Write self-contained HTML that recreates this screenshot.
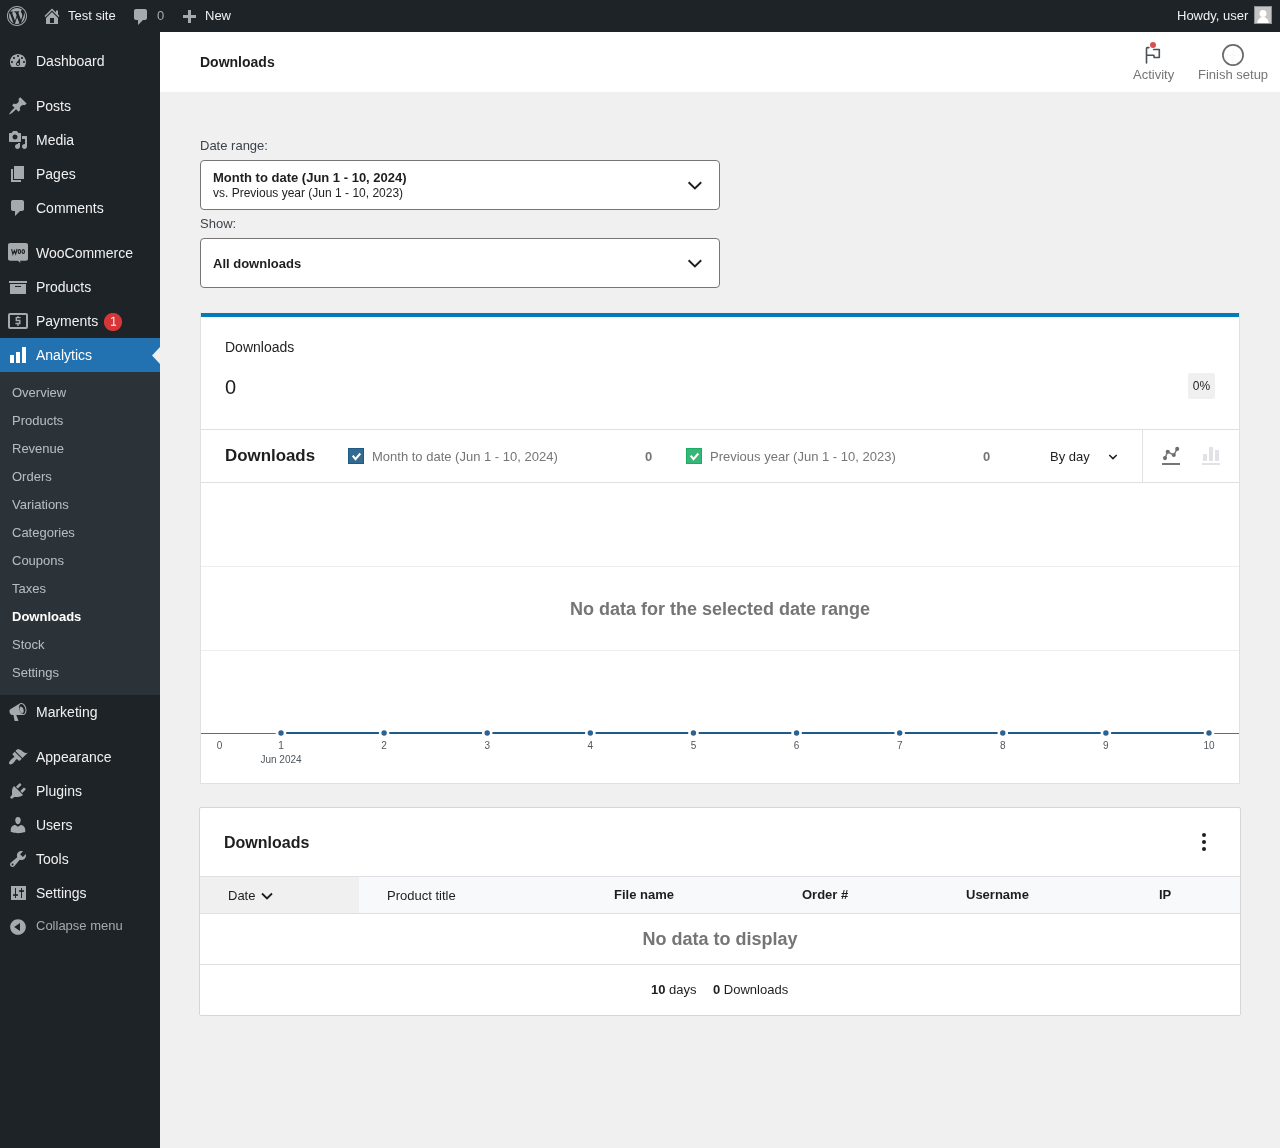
<!DOCTYPE html>
<html><head><meta charset="utf-8">
<style>
*{box-sizing:border-box;margin:0;padding:0}
html,body{width:1280px;height:1148px;overflow:hidden;background:#f0f0f1;-webkit-font-smoothing:antialiased;font-family:"Liberation Sans",sans-serif;color:#1e1e1e}
svg{display:block;position:absolute}
.a{position:absolute;white-space:nowrap}
/* admin bar */
#ab{position:absolute;left:0;top:0;width:1280px;height:32px;background:#1d2327;color:#f0f0f1;font-size:13px}
#ab .a{line-height:32px;top:0}
/* menu */
#menu{position:absolute;left:0;top:32px;width:160px;height:1116px;background:#1d2327}
.mi{position:absolute;left:0;width:160px;height:34px;color:#f0f0f1;font-size:14px;line-height:34px}
.mi>span{position:absolute;left:36px;top:0}
.mi svg{left:8px;top:7px;fill:#a7aaad}
.mi.cur{background:#2271b1;color:#fff}
.mi.cur svg{fill:#fff}
#sub{position:absolute;left:0;top:372px;width:160px;height:323px;background:#2c3338}
.si{position:absolute;left:12px;font-size:13px;color:rgba(240,246,252,.7);line-height:28px;height:28px}
.si.on{color:#fff;font-weight:bold}
/* header */
#hdr{position:absolute;left:160px;top:32px;width:1120px;height:60px;background:#fff}
</style></head>
<body>
<div id="root" style="position:absolute;left:0;top:0;width:1280px;height:1148px;will-change:transform">
<div id="ab">
  <svg style="left:7px;top:6px" width="20" height="20" viewBox="0 0 20 20" fill="#a7aaad"><path d="M20 10c0-5.52-4.48-10-10-10S0 4.48 0 10s4.48 10 10 10 10-4.48 10-10zM10 1.01c4.97 0 8.99 4.02 8.99 8.99s-4.02 8.99-8.99 8.99S1.01 14.97 1.01 10 5.03 1.01 10 1.01zM8.01 14.82L4.96 6.61c.49-.03 1.05-.08 1.05-.08.43-.05.38-1.01-.06-.99 0 0-1.29.1-2.13.1-.15 0-.33 0-.52-.01 1.44-2.17 3.9-3.6 6.7-3.6 2.09 0 3.99.79 5.41 2.09-.6-.08-1.45.35-1.45 1.42 0 .66.38 1.22.79 1.88.31.54.5 1.22.5 2.19 0 1.34-1.27 4.48-1.27 4.48l-2.71-7.5c.48-.03.75-.16.75-.16.43-.05.38-1.1-.05-1.08 0 0-1.3.11-2.14.11-.78 0-2.1-.11-2.1-.11-.43-.02-.48 1.06-.05 1.08l.84.08 1.12 3.04zm6.02 2.15L16.64 10s.67-1.69.39-3.81c.63 1.14.94 2.42.94 3.81 0 2.96-1.56 5.58-3.94 6.97zM2.68 6.77L6.5 17.25c-2.67-1.3-4.47-4.08-4.47-7.25 0-1.16.2-2.23.65-3.23zm7.45 4.53l2.29 6.25c-.75.27-1.57.42-2.42.42-.72 0-1.41-.11-2.06-.3z"/></svg>
  <svg style="left:42px;top:6px" width="20" height="20" viewBox="0 0 20 20" fill="#a7aaad"><path d="M16 8.5l1.53 1.53-1.06 1.06L10 4.62l-6.47 6.47-1.06-1.06L10 2.5l4 4v-2h2v4zm-6-2.46l6 5.99V18H4v-5.97zM12 17v-5H8v5h4z"/></svg>
  <span class="a" style="left:68px">Test site</span>
  <svg style="left:131px;top:7px" width="20" height="20" viewBox="0 0 20 20" fill="#a7aaad"><path d="M5 2h9c1.1 0 2 .9 2 2v7c0 1.1-.9 2-2 2h-2l-5 5v-5H5c-1.1 0-2-.9-2-2V4c0-1.1.9-2 2-2z"/></svg>
  <span class="a" style="left:157px;color:#a7aaad">0</span>
  <svg style="left:183px;top:10px" width="13" height="13" viewBox="0 0 13 13" fill="#a7aaad"><path d="M5 0h3v5h5v3H8v5H5V8H0V5h5z"/></svg>
  <span class="a" style="left:205px">New</span>
  <span class="a" style="left:1177px">Howdy, user</span>
  <div class="a" style="left:1254px;top:6px;width:18px;height:18px;background:#c4c4c4;border:1px solid #8c8f94;overflow:hidden">
    <svg style="left:0;top:0" width="16" height="16" viewBox="0 0 16 16" fill="#fff"><circle cx="8" cy="6.4" r="3.5"/><path d="M2.2 16c.5-3.6 2.6-6 5.8-6s5.3 2.4 5.8 6z"/></svg>
  </div>
</div>
<div id="menu"></div>
<!-- menu items -->
<div class="mi" style="top:44px"><svg width="20" height="20" viewBox="0 0 20 20"><path d="M3.76 16h12.48c1.1-1.37 1.76-3.11 1.76-5 0-4.42-3.58-8-8-8s-8 3.58-8 8c0 1.89.66 3.63 1.76 5zM10 4c.55 0 1 .45 1 1s-.45 1-1 1-1-.45-1-1 .45-1 1-1zM6 6c.55 0 1 .45 1 1s-.45 1-1 1-1-.45-1-1 .45-1 1-1zm8 0c.55 0 1 .45 1 1s-.45 1-1 1-1-.45-1-1 .45-1 1-1zm-5.37 5.55L12 7v6c0 1.1-.9 2-2 2s-2-.9-2-2c0-.57.24-1.08.63-1.45zM4 10c.55 0 1 .45 1 1s-.45 1-1 1-1-.45-1-1 .45-1 1-1zm12 0c.55 0 1 .45 1 1s-.45 1-1 1-1-.45-1-1 .45-1 1-1zm-5 3c0-.55-.45-1-1-1s-1 .45-1 1 .45 1 1 1 1-.45 1-1z"/></svg><span>Dashboard</span></div>
<div class="mi" style="top:89px"><svg width="20" height="20" viewBox="0 0 20 20"><path d="M10.44 3.02l1.82-1.82 6.36 6.35-1.83 1.82c-1.05-.68-2.48-.57-3.41.36l-.75.75c-.92.93-1.04 2.35-.35 3.41l-1.83 1.82-2.41-2.41-2.8 2.79c-.42.42-3.38 2.71-3.8 2.29s1.86-3.39 2.28-3.81l2.79-2.79L4.1 9.36l1.83-1.82c1.05.69 2.48.57 3.4-.36l.75-.75c.93-.92 1.05-2.35.36-3.41z"/></svg><span>Posts</span></div>
<div class="mi" style="top:123px"><svg width="20" height="20" viewBox="0 0 20 20"><path d="M13 11V4c0-.55-.45-1-1-1h-1.67L9 1H5L3.67 3H2c-.55 0-1 .45-1 1v7c0 .55.45 1 1 1h10c.55 0 1-.45 1-1zM7 4.5c1.38 0 2.5 1.12 2.5 2.5S8.38 9.5 7 9.5 4.5 8.38 4.5 7 5.62 4.5 7 4.5zM14 6h5v10.5c0 1.38-1.12 2.5-2.5 2.5S14 17.88 14 16.5s1.12-2.5 2.5-2.5c.17 0 .34.02.5.05V9h-3V6zm-4 8.05V13h2v3.5c0 1.38-1.12 2.5-2.5 2.5S7 17.88 7 16.5 8.12 14 9.5 14c.17 0 .34.02.5.05z"/></svg><span>Media</span></div>
<div class="mi" style="top:157px"><svg width="20" height="20" viewBox="0 0 20 20"><path d="M6 15V2h10v13H6zm-1 1h8v2H3V5h2v11z"/></svg><span>Pages</span></div>
<div class="mi" style="top:191px"><svg width="20" height="20" viewBox="0 0 20 20"><path d="M5 2h9c1.1 0 2 .9 2 2v7c0 1.1-.9 2-2 2h-2l-5 5v-5H5c-1.1 0-2-.9-2-2V4c0-1.1.9-2 2-2z"/></svg><span>Comments</span></div>
<div class="mi" style="top:236px"><svg width="20" height="20" viewBox="0 0 20 20"><path d="M2 0h16c1.1 0 2 .9 2 2v13.8c0 1.1-.9 2-2 2h-5.9l.3 2.1-2.4-2.1H2c-1.1 0-2-.9-2-2V2C0 .9.9 0 2 0z"/><g fill="none" stroke="#1d2327" stroke-width="1.15"><path d="M3.6 6.1l1.3 5.1 1.5-3.6 1.3 3.4 1.4-5"/><ellipse cx="11.4" cy="8.5" rx="1.2" ry="1.95"/><ellipse cx="15.3" cy="8.5" rx="1.2" ry="1.95"/></g></svg><span>WooCommerce</span></div>
<div class="mi" style="top:270px"><svg width="20" height="20" viewBox="0 0 20 20"><path d="M19 4v2H1V4h18zM2 7h16v10H2V7zm11 3V9H7v1h6z"/></svg><span>Products</span></div>
<div class="mi" style="top:304px"><svg width="20" height="20" viewBox="0 0 20 20"><rect x="1" y="3.1" width="18" height="13.9" rx="1" fill="none" stroke="#a7aaad" stroke-width="2"/><path d="M12.6 6.6H8.3v2.9h3.5v3H7.4M10 4.9v1.8M10 12.4V15" fill="none" stroke="#a7aaad" stroke-width="1.4"/></svg><span>Payments</span>
  <svg style="left:104px;top:9px" width="18" height="18" viewBox="0 0 18 18"><circle cx="9" cy="9" r="9.1" fill="#d63638"/><path d="M9.8 4v8.2M7 12.3h5.1M9.6 4.1L7.2 5.6" fill="none" stroke="#fff" stroke-width="1.05"/></svg></div>
<div class="mi cur" style="top:338px"><svg width="20" height="20" viewBox="0 0 20 20"><path d="M18 18V2h-4v16h4zm-6 0V7H8v11h4zm-6 0v-8H2v8h4z"/></svg><span>Analytics</span>
  <svg style="left:152px;top:9px" width="8" height="17" viewBox="0 0 8 17"><path d="M8 0v17L0 8.5z" fill="#f0f0f1"/></svg></div>
<div id="sub">
  <div class="si" style="top:7px">Overview</div>
  <div class="si" style="top:35px">Products</div>
  <div class="si" style="top:63px">Revenue</div>
  <div class="si" style="top:91px">Orders</div>
  <div class="si" style="top:119px">Variations</div>
  <div class="si" style="top:147px">Categories</div>
  <div class="si" style="top:175px">Coupons</div>
  <div class="si" style="top:203px">Taxes</div>
  <div class="si on" style="top:231px">Downloads</div>
  <div class="si" style="top:259px">Stock</div>
  <div class="si" style="top:287px">Settings</div>
</div>
<div class="mi" style="top:695px"><svg width="20" height="20" viewBox="0 0 20 20"><path d="M18.15 5.94c.46 1.62.38 3.22-.02 4.48-.42 1.28-1.26 2.18-2.3 2.48-.16.06-.26.06-.4.06-.06.02-.12.02-.18.02-.06.02-.14.02-.22.02h-6.8l2.22 5.5c.02.14-.06.26-.14.34-.08.1-.24.16-.34.16H6.95c-.1 0-.26-.06-.34-.16-.08-.08-.16-.2-.14-.34l-1-5.5H4.25l-.02-.02c-.5.06-1.08-.18-1.54-.62s-.88-1.08-1.06-1.88c-.24-.8-.2-1.56-.02-2.2.18-.62.58-1.08 1.06-1.3l.02-.02 9-5.4c.1-.06.18-.1.24-.16.06-.04.14-.08.24-.12.16-.08.28-.12.5-.18 1.04-.3 2.24.1 3.22.98s1.84 2.24 2.26 3.86zm-2.58 5.98h-.02c.4-.1.74-.34 1.04-.7.58-.7.86-1.76.86-3.04 0-.64-.1-1.3-.28-1.98-.34-1.36-1.02-2.5-1.78-3.24s-1.68-1.1-2.46-.88c-.82.22-1.4.96-1.7 2-.32 1.04-.28 2.360.06 3.72.38 1.36 1 2.52 1.8 3.24.78.74 1.62 1.1 2.48.88zm-2.54-7.08c.22-.04.42-.02.62.04.38.16.76.48 1.120 1s.64 1.14.8 1.84c.2.68.2 1.36.1 1.94-.1.6-.38 1.08-.8 1.32-.4.24-.8.18-1.18-.02-.42-.2-.84-.62-1.18-1.16-.34-.52-.62-1.16-.78-1.86-.2-.7-.2-1.36-.1-1.94.1-.58.4-1.06.8-1.32.18-.1.38-.18.6-.22z"/></svg><span>Marketing</span></div>
<div class="mi" style="top:740px"><svg width="20" height="20" viewBox="0 0 20 20"><path d="M14.48 11.06L7.41 3.99l1.5-1.5c.5-.56 2.3-.47 3.51.32 1.21.8 1.43 1.28 2.91 2.1 1.18.64 2.45 1.26 4.45.85zm-.71.71L6.7 4.7 4.93 6.47c-.39.39-.39 1.02 0 1.41l1.06 1.06c.39.39.39 1.03 0 1.42-.6.6-1.43 1.11-2.21 1.690-.35.26-.7.53-1.01.84C1.43 14.23.4 16.08 1.4 17.07c.99 1 2.84-.03 4.18-1.36.31-.31.58-.66.85-1.02.57-.78 1.08-1.61 1.69-2.21.39-.39 1.02-.39 1.41 0l1.06 1.06c.39.39 1.02.39 1.41 0z"/></svg><span>Appearance</span></div>
<div class="mi" style="top:774px"><svg width="20" height="20" viewBox="0 0 20 20"><path d="M13.11 4.36L9.87 7.6 8 5.73l3.24-3.24c.35-.34 1.05-.2 1.56.32.52.51.66 1.21.31 1.55zm-8 1.77l.91-1.12 9.01 9.01-1.19.84c-.71.71-2.63 1.16-3.82 1.16H6.14L4.9 17.26c-.59.59-1.54.59-2.12 0-.59-.58-.59-1.53 0-2.120l1.24-1.24v-3.88c0-1.13.4-3.19 1.09-3.89zm7.26 3.97l3.24-3.24c.34-.35 1.04-.21 1.55.31.52.51.66 1.21.31 1.55l-3.24 3.25z"/></svg><span>Plugins</span></div>
<div class="mi" style="top:808px"><svg width="20" height="20" viewBox="0 0 20 20"><path d="M10 9.25c-2.27 0-2.73-3.44-2.73-3.44C7 4.02 7.82 2 9.97 2c2.16 0 2.98 2.02 2.71 3.81 0 0-.41 3.44-2.68 3.44zm0 2.57L12.72 10c2.39 0 4.52 2.33 4.52 4.53v2.49s-3.65 1.13-7.24 1.13c-3.65 0-7.24-1.13-7.24-1.13v-2.49c0-2.25 1.94-4.48 4.47-4.48z"/></svg><span>Users</span></div>
<div class="mi" style="top:842px"><svg width="20" height="20" viewBox="0 0 20 20"><path d="M16.68 9.77c-1.34 1.34-3.3 1.67-4.95.99l-5.41 6.52c-.99.99-2.59.99-3.58 0s-.99-2.59 0-3.57l6.52-5.42c-.68-1.65-.35-3.61.99-4.95 1.28-1.28 3.12-1.62 4.72-1.06l-2.89 2.89 2.82 2.82 2.86-2.87c.53 1.58.18 3.39-1.08 4.65zM3.81 16.21c.4.39 1.04.39 1.43 0 .4-.4.4-1.04 0-1.43-.39-.4-1.03-.4-1.43 0-.39.39-.39 1.030 0 1.43z"/></svg><span>Tools</span></div>
<div class="mi" style="top:876px"><svg width="20" height="20" viewBox="0 0 20 20"><rect x="3" y="3" width="15" height="14"/><g fill="#1d2327"><rect x="7" y="5" width="1" height="10"/><rect x="5.1" y="11.2" width="4.8" height="1.7"/><rect x="13" y="5" width="1" height="10"/><rect x="11.1" y="7.1" width="4.8" height="1.8"/></g></svg><span>Settings</span></div>
<div class="mi" style="top:910px;font-size:13px;color:#a7aaad"><svg width="20" height="20" viewBox="0 0 20 20"><path d="M10 2.16c4.33 0 7.84 3.51 7.84 7.84s-3.51 7.84-7.84 7.84S2.16 14.33 2.16 10 5.71 2.16 10 2.16zm2 11.72V6.12L6.18 9.970z"/></svg><span style="top:-1px">Collapse menu</span></div>
<div id="hdr"></div>
<div class="a" style="left:200px;top:52px;font-size:14px;font-weight:bold;color:#1e1e1e;line-height:20px">Downloads</div>
<!-- activity -->
<svg style="left:1142px;top:40px" width="22" height="26" viewBox="0 0 22 26"><path d="M4.5 23V8.3Q4.5 7.6 5.3 7.6H6.9M11.6 9.5H17.3V17.5H12.2L11.8 15.2H4.5" fill="none" stroke="#4a5158" stroke-width="1.6" stroke-linecap="round" stroke-linejoin="round"/><circle cx="11" cy="4.9" r="3" fill="#d94f4f"/></svg>
<div class="a" style="left:1133px;top:67px;font-size:13px;color:#757575;line-height:16px">Activity</div>
<svg style="left:1220px;top:42px" width="26" height="26" viewBox="0 0 26 26"><path d="M13 4.5v17M4.5 13h17" stroke="#f4f4f5" stroke-width=".8"/><circle cx="13" cy="13" r="10.1" fill="none" stroke="#6a6a6a" stroke-width="1.7"/></svg>
<div class="a" style="left:1198px;top:67px;font-size:13px;color:#757575;line-height:16px">Finish setup</div>

<!-- filters -->
<div class="a" style="left:200px;top:137px;font-size:13px;color:#3c434a;line-height:18px">Date range:</div>
<div class="a" style="left:200px;top:160px;width:520px;height:50px;background:#fff;border:1px solid #757575;border-radius:4px"></div>
<div class="a" style="left:213px;top:170px;font-size:13px;font-weight:bold;color:#1e1e1e;line-height:16px">Month to date (Jun 1 - 10, 2024)</div>
<div class="a" style="left:213px;top:185px;font-size:12px;color:#1e1e1e;line-height:16px">vs. Previous year (Jun 1 - 10, 2023)</div>
<svg style="left:686px;top:176px" width="18" height="18" viewBox="0 0 18 18"><path d="M2.6 6.3l6.3 6.2 6.3-6.2" fill="none" stroke="#1e1e1e" stroke-width="1.9"/></svg>
<div class="a" style="left:200px;top:215px;font-size:13px;color:#3c434a;line-height:18px">Show:</div>
<div class="a" style="left:200px;top:238px;width:520px;height:50px;background:#fff;border:1px solid #757575;border-radius:4px"></div>
<div class="a" style="left:213px;top:256px;font-size:13px;font-weight:bold;color:#1e1e1e;line-height:16px">All downloads</div>
<svg style="left:686px;top:254px" width="18" height="18" viewBox="0 0 18 18"><path d="M2.6 6.3l6.3 6.2 6.3-6.2" fill="none" stroke="#1e1e1e" stroke-width="1.9"/></svg>

<!-- summary + chart card -->
<div class="a" style="left:200px;top:312px;width:1040px;height:472px;background:#fff;border:1px solid #dfe0e4;border-top-color:#f3ece8"></div>
<div class="a" style="left:201px;top:313px;width:1038px;height:4px;background:#007cba"></div>
<div class="a" style="left:225px;top:339px;font-size:14px;color:#1e1e1e;line-height:16px">Downloads</div>
<div class="a" style="left:225px;top:375px;font-size:20px;color:#1e1e1e;line-height:24px">0</div>
<div class="a" style="left:1188px;top:373px;width:27px;height:26px;background:#f0f0f0;border-radius:2px;font-size:12px;line-height:26px;text-align:center;color:#1e1e1e">0%</div>
<div class="a" style="left:201px;top:429px;width:1038px;height:1px;background:#dfe0e4"></div>
<div class="a" style="left:201px;top:482px;width:1038px;height:1px;background:#dfe0e4"></div>
<div class="a" style="left:1142px;top:430px;width:1px;height:52px;background:#dfe0e4"></div>
<div class="a" style="left:225px;top:446px;font-size:16.9px;font-weight:bold;color:#1e1e1e;line-height:20px">Downloads</div>
<div class="a" style="left:348px;top:448px;width:16px;height:16px;background:#336a92;border:1px solid #1f5a86"></div>
<svg style="left:348px;top:448px" width="16" height="16" viewBox="0 0 16 16"><path d="M4.7 7.6l2.8 3.6 4.8-5.7" fill="none" stroke="#fff" stroke-width="2.1"/></svg>
<div class="a" style="left:372px;top:449px;font-size:13px;color:#757575;line-height:16px">Month to date (Jun 1 - 10, 2024)</div>
<div class="a" style="left:645px;top:449px;font-size:13px;font-weight:bold;color:#757575;line-height:16px">0</div>
<div class="a" style="left:686px;top:448px;width:16px;height:16px;background:#37b679;border:1px solid #1dac62"></div>
<svg style="left:686px;top:448px" width="16" height="16" viewBox="0 0 16 16"><path d="M4.7 7.6l2.8 3.6 4.8-5.7" fill="none" stroke="#fff" stroke-width="2.1"/></svg>
<div class="a" style="left:710px;top:449px;font-size:13px;color:#757575;line-height:16px">Previous year (Jun 1 - 10, 2023)</div>
<div class="a" style="left:983px;top:449px;font-size:13px;font-weight:bold;color:#757575;line-height:16px">0</div>
<div class="a" style="left:1050px;top:449px;font-size:13px;color:#1e1e1e;line-height:16px">By day</div>
<svg style="left:1107px;top:451px" width="12" height="12" viewBox="0 0 12 12"><path d="M2.3 4l3.7 3.6L9.7 4" fill="none" stroke="#1e1e1e" stroke-width="1.5"/></svg>
<svg style="left:1160px;top:446px" width="22" height="20" viewBox="0 0 22 20"><path d="M5 12.1l2.7-6.3 6.1 3.2L17.2 2.9" fill="none" stroke="#757575" stroke-width="1.4"/><circle cx="5" cy="12.1" r="2.05" fill="#6e6e6e"/><circle cx="7.7" cy="5.8" r="2.05" fill="#6e6e6e"/><circle cx="13.8" cy="9" r="2.05" fill="#6e6e6e"/><circle cx="17.2" cy="2.9" r="2.05" fill="#6e6e6e"/><rect x="2" y="17" width="18" height="2" fill="#757575"/></svg>
<svg style="left:1200px;top:446px" width="22" height="20" viewBox="0 0 22 20"><rect x="3" y="8" width="4" height="7" fill="#e0e2e6"/><rect x="9" y="1" width="4" height="14" fill="#e0e2e6"/><rect x="15" y="4" width="4" height="11" fill="#e0e2e6"/><rect x="2" y="17" width="18" height="2" fill="#e0e2e6"/></svg>
<!-- chart body -->
<div class="a" style="left:201px;top:566px;width:1038px;height:1px;background:#ededed"></div>
<div class="a" style="left:201px;top:650px;width:1038px;height:1px;background:#ededed"></div>
<div class="a" style="left:201px;top:599px;width:1038px;text-align:center;font-size:18px;font-weight:bold;color:#757575;line-height:20px">No data for the selected date range</div>
<svg style="left:201px;top:720px" width="1038" height="50" viewBox="201 720 1038 50" id="chart" font-family="Liberation Sans" font-size="10" fill="#50575e"><rect x="201" y="733" width="1038" height="1" fill="#6b6b6b"/><rect x="281" y="732" width="928" height="2" fill="#1e5b8b"/><circle cx="281.00" cy="733" r="5.3" fill="#fff"/><circle cx="281.00" cy="733" r="2.7" fill="#2c6190"/><text x="281.00" y="748.7" text-anchor="middle">1</text><circle cx="384.11" cy="733" r="5.3" fill="#fff"/><circle cx="384.11" cy="733" r="2.7" fill="#2c6190"/><text x="384.11" y="748.7" text-anchor="middle">2</text><circle cx="487.22" cy="733" r="5.3" fill="#fff"/><circle cx="487.22" cy="733" r="2.7" fill="#2c6190"/><text x="487.22" y="748.7" text-anchor="middle">3</text><circle cx="590.33" cy="733" r="5.3" fill="#fff"/><circle cx="590.33" cy="733" r="2.7" fill="#2c6190"/><text x="590.33" y="748.7" text-anchor="middle">4</text><circle cx="693.44" cy="733" r="5.3" fill="#fff"/><circle cx="693.44" cy="733" r="2.7" fill="#2c6190"/><text x="693.44" y="748.7" text-anchor="middle">5</text><circle cx="796.56" cy="733" r="5.3" fill="#fff"/><circle cx="796.56" cy="733" r="2.7" fill="#2c6190"/><text x="796.56" y="748.7" text-anchor="middle">6</text><circle cx="899.67" cy="733" r="5.3" fill="#fff"/><circle cx="899.67" cy="733" r="2.7" fill="#2c6190"/><text x="899.67" y="748.7" text-anchor="middle">7</text><circle cx="1002.78" cy="733" r="5.3" fill="#fff"/><circle cx="1002.78" cy="733" r="2.7" fill="#2c6190"/><text x="1002.78" y="748.7" text-anchor="middle">8</text><circle cx="1105.89" cy="733" r="5.3" fill="#fff"/><circle cx="1105.89" cy="733" r="2.7" fill="#2c6190"/><text x="1105.89" y="748.7" text-anchor="middle">9</text><circle cx="1209.00" cy="733" r="5.3" fill="#fff"/><circle cx="1209.00" cy="733" r="2.7" fill="#2c6190"/><text x="1209.00" y="748.7" text-anchor="middle">10</text><text x="219.5" y="748.7" text-anchor="middle">0</text><text x="281.00" y="763" text-anchor="middle">Jun 2024</text></svg>
<!-- table card -->
<div class="a" style="left:199px;top:807px;width:1042px;height:209px;background:#fff;border:1px solid #d6d6d6;border-radius:2px"></div>
<div class="a" style="left:224px;top:833px;font-size:16px;font-weight:bold;color:#1e1e1e;line-height:20px">Downloads</div>
<svg style="left:1194px;top:832px" width="20" height="20" viewBox="0 0 20 20" fill="#1e1e1e"><circle cx="10" cy="3" r="2"/><circle cx="10" cy="10" r="2"/><circle cx="10" cy="17" r="2"/></svg>
<div class="a" style="left:200px;top:876px;width:1040px;height:38px;background:#f8f9fa;border-top:1px solid #dfe0e4;border-bottom:1px solid #dfe0e4"></div>
<div class="a" style="left:200px;top:877px;width:159px;height:36px;background:#f0f0f0"></div>
<div class="a" style="left:228px;top:888px;font-size:13px;color:#1e1e1e;line-height:16px">Date</div>
<svg style="left:259px;top:888px" width="16" height="14" viewBox="0 0 16 14"><path d="M3 5.5l5 5 5-5" fill="none" stroke="#1e1e1e" stroke-width="1.8"/></svg>
<div class="a" style="left:387px;top:888px;font-size:13px;color:#1e1e1e;line-height:16px">Product title</div>
<div class="a" style="left:614px;top:887px;font-size:13px;font-weight:bold;color:#1e1e1e;line-height:16px">File name</div>
<div class="a" style="left:802px;top:887px;font-size:13px;font-weight:bold;color:#1e1e1e;line-height:16px">Order #</div>
<div class="a" style="left:966px;top:887px;font-size:13px;font-weight:bold;color:#1e1e1e;line-height:16px">Username</div>
<div class="a" style="left:1159px;top:887px;font-size:13px;font-weight:bold;color:#1e1e1e;line-height:16px">IP</div>
<div class="a" style="left:200px;top:929px;width:1040px;text-align:center;font-size:18px;font-weight:bold;color:#757575;line-height:20px">No data to display</div>
<div class="a" style="left:200px;top:964px;width:1040px;height:1px;background:#dfe0e4"></div>
<div class="a" style="left:651px;top:982px;font-size:13px;color:#1e1e1e;line-height:16px"><b>10</b> days</div>
<div class="a" style="left:713px;top:982px;font-size:13px;color:#1e1e1e;line-height:16px"><b>0</b> Downloads</div>
</div>
</body></html>
